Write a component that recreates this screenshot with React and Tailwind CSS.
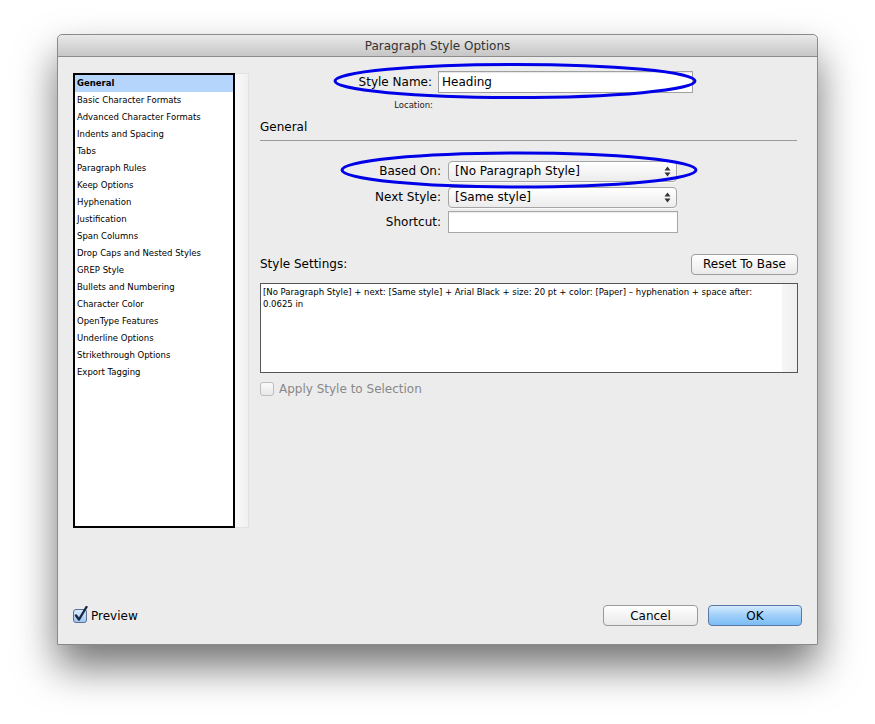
import React from "react";

const FONT = { fontFamily: '"DejaVu Sans", "Liberation Sans", sans-serif' };

const listItems = [
  "General",
  "Basic Character Formats",
  "Advanced Character Formats",
  "Indents and Spacing",
  "Tabs",
  "Paragraph Rules",
  "Keep Options",
  "Hyphenation",
  "Justification",
  "Span Columns",
  "Drop Caps and Nested Styles",
  "GREP Style",
  "Bullets and Numbering",
  "Character Color",
  "OpenType Features",
  "Underline Options",
  "Strikethrough Options",
  "Export Tagging",
];

function Arrows() {
  return (
    <svg width="7" height="11" viewBox="0 0 7 11" className="shrink-0">
      <path d="M3.5 0.5 L6.5 4.5 L0.5 4.5 Z" fill="#333" />
      <path d="M3.5 10.5 L6.5 6.5 L0.5 6.5 Z" fill="#333" />
    </svg>
  );
}

function Select({ value }) {
  return (
    <div className="flex h-[21px] w-[229px] items-center justify-between rounded-[4px] border border-[#a5a5a5] bg-gradient-to-b from-white to-[#ececec] pl-[6px] pr-[5px] text-[12px] text-black shadow-[0_1px_0_rgba(255,255,255,0.8)]">
      <span className="leading-none">{value}</span>
      <Arrows />
    </div>
  );
}

function Row({ label, labelW, gap, children }) {
  return (
    <div className="flex items-center">
      <div className="flex justify-end text-[12px] text-black" style={{ width: labelW }}>
        {label}
      </div>
      <div style={{ width: gap }} />
      {children}
    </div>
  );
}

export default function App() {
  return (
    <div className="relative h-[724px] w-[875px] overflow-hidden bg-white" style={FONT}>
      <div className="pl-[57px] pt-[34px]">
        <div className="flex h-[611px] w-[761px] flex-col rounded-t-[5px] border border-[#8a8a8a] bg-[#ececec] shadow-[0_22px_40px_rgba(0,0,0,0.55)]">
          {/* title bar */}
          <div className="flex h-[22px] shrink-0 items-center justify-center rounded-t-[5px] border-b border-[#8c8c8c] bg-gradient-to-b from-[#e9e9e9] to-[#c6c6c6] pt-[1px] text-[12px] text-[#333]">
            Paragraph Style Options
          </div>

          {/* body */}
          <div className="flex flex-1 flex-col px-[15px] pt-[16px]">
            <div className="flex h-[455px]">
              {/* list */}
              <div className="flex h-full w-[176px] shrink-0">
                <div className="h-full w-[162px] border-2 border-black bg-white">
                  {listItems.map((it, i) => (
                    <div
                      key={it}
                      className={
                        "flex h-[17px] items-center pb-[1px] pl-[2px] text-[8.5px] text-black " +
                        (i === 0 ? "bg-[#b5d5fd] font-bold" : "")
                      }
                    >
                      {it}
                    </div>
                  ))}
                </div>
                <div className="h-full w-[14px] border-y border-r border-[#e2e2e2] bg-gradient-to-r from-[#fafafa] to-[#f0f0f0]" />
              </div>

              {/* right column */}
              <div className="ml-[11px] flex w-[538px] flex-col">
                <div className="mt-[-2px]">
                  <Row label="Style Name:" labelW={172} gap={6}>
                    <div className="flex h-[22px] w-[255px] items-center border border-[#a0a0a0] bg-white pl-[3px] text-[12px] text-black shadow-[inset_0_1px_1px_rgba(0,0,0,0.1)]">
                      Heading
                    </div>
                  </Row>
                </div>
                <div className="mt-[6px] flex w-[173px] justify-end text-[8.5px] text-[#222]">Location:</div>

                <div className="mt-[6px] text-[12px] text-black">General</div>
                <div className="mt-[4px] h-px w-[537px] bg-[#9a9a9a]" />

                <div className="mt-[20px] flex flex-col gap-[5px]">
                  <Row label="Based On:" labelW={181} gap={7}>
                    <Select value="[No Paragraph Style]" />
                  </Row>
                  <Row label="Next Style:" labelW={181} gap={7}>
                    <Select value="[Same style]" />
                  </Row>
                  <div className="mt-[-2px]">
                    <Row label="Shortcut:" labelW={181} gap={7}>
                      <div className="h-[22px] w-[230px] border border-[#a8a8a8] bg-white shadow-[inset_0_1px_1px_rgba(0,0,0,0.08)]" />
                    </Row>
                  </div>
                </div>

                <div className="mt-[21px] flex items-center justify-between">
                  <span className="text-[12px] text-black">Style Settings:</span>
                  <div className="flex h-[21px] w-[107px] items-center justify-center rounded-[4px] border border-[#9c9c9c] bg-gradient-to-b from-white to-[#eaeaea] text-[12px] text-black">
                    Reset To Base
                  </div>
                </div>

                <div className="mt-[8px] flex h-[90px] w-[538px] border border-[#555] bg-white">
                  <div className="flex-1 px-[2px] pt-[2px] text-[8.5px] leading-[12px] text-black">
                    [No Paragraph Style] + next: [Same style] + Arial Black + size: 20 pt + color: [Paper] – hyphenation + space after:
                    <br />
                    0.0625 in
                  </div>
                  <div className="h-full w-[15px] bg-gradient-to-r from-[#f6f6f6] to-[#efefef]" />
                </div>

                <div className="mt-[7px] flex items-center">
                  <div className="h-[14px] w-[14px] rounded-[3px] border border-[#bdbdbd] bg-gradient-to-b from-[#fafafa] to-[#e8e8e8]" />
                  <span className="ml-[5px] text-[12px] text-[#888]">Apply Style to Selection</span>
                </div>
              </div>
            </div>

            {/* footer */}
            <div className="mt-[77px] flex h-[21px] items-center justify-between">
              <div className="flex items-center">
                <svg width="15" height="17" viewBox="0 0 15 17" className="mb-[2px]">
                  <defs>
                    <linearGradient id="cb" x1="0" y1="0" x2="0" y2="1">
                      <stop offset="0" stopColor="#dcecff" />
                      <stop offset="1" stopColor="#9cc6f2" />
                    </linearGradient>
                  </defs>
                  <rect x="0.5" y="3.5" width="13" height="13" rx="2.5" fill="url(#cb)" stroke="#5a6f92" />
                  <path d="M3 9.5 L6 13.5 L13.5 1" fill="none" stroke="#1b2a44" strokeWidth="2.4" strokeLinecap="round" strokeLinejoin="round" />
                </svg>
                <span className="ml-[3px] text-[12px] text-black">Preview</span>
              </div>
              <div className="mr-[0px] flex gap-[10px]">
                <div className="flex h-[21px] w-[95px] items-center justify-center rounded-[4px] border border-[#9a9a9a] bg-gradient-to-b from-white to-[#e9e9e9] text-[12px] text-black">
                  Cancel
                </div>
                <div className="flex h-[21px] w-[94px] items-center justify-center rounded-[4px] border border-[#5b78a5] bg-gradient-to-b from-[#d4ebff] via-[#9fcff9] to-[#7bbdf6] text-[12px] text-black">
                  OK
                </div>
              </div>
            </div>
          </div>
        </div>
      </div>

      {/* annotation ellipses */}
      <svg className="pointer-events-none absolute left-0 top-0" width="875" height="724">
        <ellipse cx="515" cy="81" rx="180" ry="16.5" fill="none" stroke="#0000e8" strokeWidth="3" />
        <ellipse cx="519" cy="170" rx="177" ry="17" fill="none" stroke="#0000e8" strokeWidth="3" />
      </svg>
    </div>
  );
}
